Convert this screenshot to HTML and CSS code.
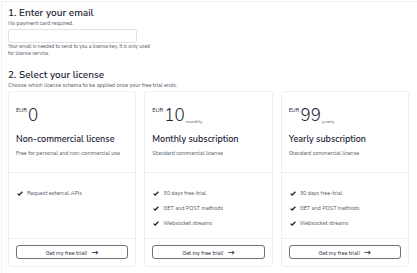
FILE: index.html
```html
<!DOCTYPE html>
<html>
<head>
    <title>Get your license</title>
    <link rel="stylesheet" href="styles.css">
</head>
<body>
    <div class="page">
        <h2 class="step-title">1. Enter your email</h2>
        <p class="note">No payment card required.</p>
        <input type="email" class="email-input">
        <p class="help">Your email is needed to send to you a license key. It is only used<br>for license service.</p>

        <h2 class="step-title second">2. Select your license</h2>
        <p class="note">Choose which license schema to be applied once your free trial ends.</p>

        <div class="plans">
            <div class="plan">
                <div class="plan-head">
                    <div class="price"><span class="cur">EUR</span><span class="amount">0</span></div>
                    <h3 class="plan-name">Non-commercial license</h3>
                    <p class="plan-desc">Free for personal and non-commercial use</p>
                </div>
                <ul class="features">
                    <li><svg class="check" viewBox="0 0 10 8"><path d="M1 4.2 3.6 6.6 9 1.2" /></svg>Request external APIs</li>
                </ul>
                <div class="plan-foot">
                    <button class="trial-btn">Get my free trial! <span class="arrow">&#8594;</span></button>
                </div>
            </div>
            <div class="plan">
                <div class="plan-head">
                    <div class="price"><span class="cur">EUR</span><span class="amount">10</span><span class="period">monthly</span></div>
                    <h3 class="plan-name">Monthly subscription</h3>
                    <p class="plan-desc">Standard commercial license</p>
                </div>
                <ul class="features">
                    <li><svg class="check" viewBox="0 0 10 8"><path d="M1 4.2 3.6 6.6 9 1.2" /></svg>30 days free-trial</li>
                    <li><svg class="check" viewBox="0 0 10 8"><path d="M1 4.2 3.6 6.6 9 1.2" /></svg>GET and POST methods</li>
                    <li><svg class="check" viewBox="0 0 10 8"><path d="M1 4.2 3.6 6.6 9 1.2" /></svg>Websocket streams</li>
                </ul>
                <div class="plan-foot">
                    <button class="trial-btn">Get my free trial! <span class="arrow">&#8594;</span></button>
                </div>
            </div>
            <div class="plan">
                <div class="plan-head">
                    <div class="price"><span class="cur">EUR</span><span class="amount">99</span><span class="period">yearly</span></div>
                    <h3 class="plan-name">Yearly subscription</h3>
                    <p class="plan-desc">Standard commercial license</p>
                </div>
                <ul class="features">
                    <li><svg class="check" viewBox="0 0 10 8"><path d="M1 4.2 3.6 6.6 9 1.2" /></svg>30 days free-trial</li>
                    <li><svg class="check" viewBox="0 0 10 8"><path d="M1 4.2 3.6 6.6 9 1.2" /></svg>GET and POST methods</li>
                    <li><svg class="check" viewBox="0 0 10 8"><path d="M1 4.2 3.6 6.6 9 1.2" /></svg>Websocket streams</li>
                </ul>
                <div class="plan-foot">
                    <button class="trial-btn">Get my free trial! <span class="arrow">&#8594;</span></button>
                </div>
            </div>
        </div>
    </div>
</body>
</html>
```

FILE: styles.css
```css
body {
    margin: 0;
    font-family: "Nunito Sans", Lato, "Open Sans", sans-serif;
    color: #1f2638;
    background: #fff;
}
.page {
    margin: 1px 0 0 1px;
    padding: 5px 8px 6px 6px;
    border-top: 1px solid #eff0f4;
    border-left: 1px solid #eff0f4;
}
.step-title {
    margin: 0;
    font-size: 10px;
    line-height: 12px;
    font-weight: 600;
    color: #1f2638;
}
.step-title.second {
    margin-top: 12px;
}
.note {
    margin: 0;
    font-size: 5.5px;
    line-height: 8px;
    color: #555a66;
}
.email-input {
    display: block;
    box-sizing: border-box;
    width: 129px;
    height: 14px;
    margin: 2px 0 0 0;
    border: 1px solid #dfe1e6;
    border-radius: 3px;
    padding: 0 4px;
}
.help {
    margin: 0;
    font-size: 5px;
    line-height: 7px;
    color: #555a66;
}
.plans {
    display: grid;
    grid-template-columns: repeat(3, 1fr);
    gap: 8px;
    margin-top: 2px;
}
.plan {
    display: flex;
    flex-direction: column;
    border: 1px solid #eeeff3;
    border-radius: 3px;
    height: 176px;
    box-sizing: border-box;
}
.plan-head {
    padding: 15px 7px 15px 7px;
    border-bottom: 1px solid #eeeff3;
}
.price {
    display: flex;
    align-items: flex-start;
    height: 18px;
}
.cur {
    font-size: 5.5px;
    line-height: 7px;
    margin-right: 1px;
}
.amount {
    font-size: 17px;
    line-height: 18px;
    font-weight: 300;
    color: #1f2638;
}
.period {
    align-self: flex-end;
    font-size: 4.5px;
    line-height: 6px;
    margin-left: 1px;
    color: #555a66;
}
.plan-name {
    margin: 9px 0 0 0;
    font-size: 9px;
    line-height: 11px;
    font-weight: 600;
}
.plan-desc {
    margin: 4px 0 0 0;
    font-size: 5.5px;
    line-height: 8px;
    color: #555a66;
}
.features {
    flex: 1;
    list-style: none;
    margin: 0;
    padding: 16px 8px 0 8px;
}
.features li {
    display: flex;
    align-items: center;
    font-size: 5.5px;
    line-height: 8px;
    color: #555a66;
    margin-bottom: 7px;
}
.check {
    width: 6px;
    height: 5px;
    margin-right: 4px;
    fill: none;
    stroke: #1f2638;
    stroke-width: 2.2;
}
.plan-foot {
    padding: 6px 7px 7px 7px;
    border-top: 1px solid #eeeff3;
}
.trial-btn {
    display: block;
    width: 100%;
    height: 14px;
    box-sizing: border-box;
    border: 1px solid #6e717a;
    border-radius: 3px;
    background: #fff;
    font-family: inherit;
    font-size: 5.5px;
    color: #1f2638;
    padding: 0;
}
.arrow {
    margin-left: 3px;
    font-size: 7px;
    font-weight: bold;
}
```
